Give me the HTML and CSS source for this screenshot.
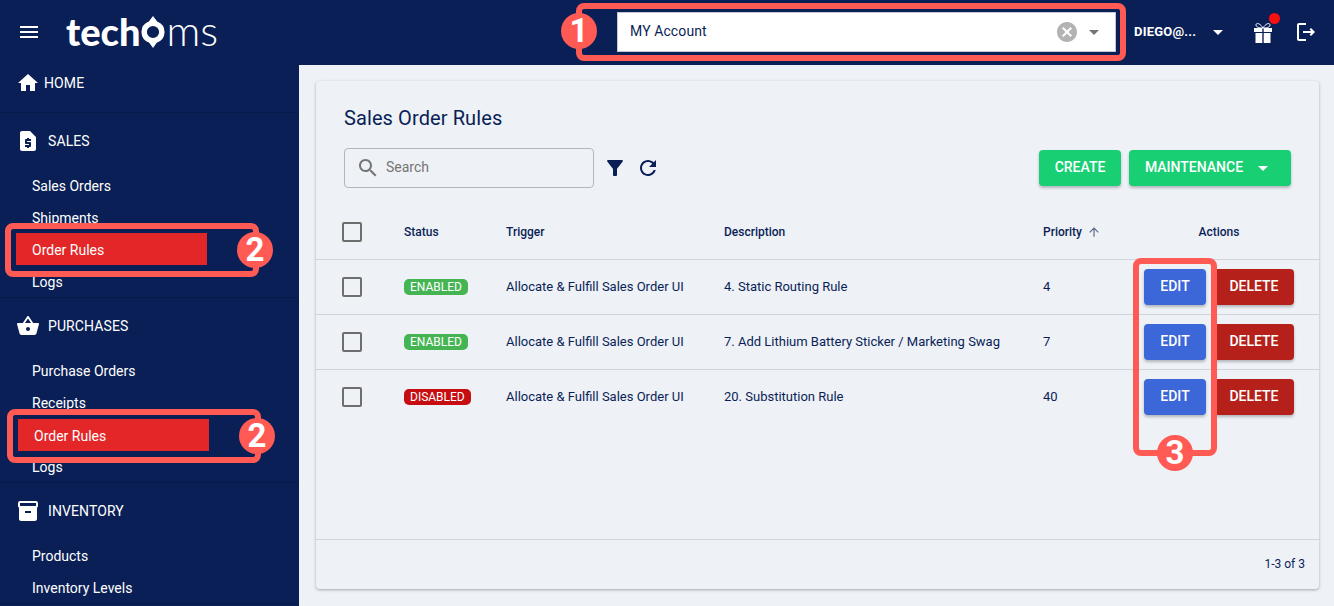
FILE: index.html
```html
<!DOCTYPE html>
<html lang="en">
<head>
    <meta charset="UTF-8">
    <meta name="viewport" content="width=device-width, initial-scale=1.0">
    <title>Sales Order Rules</title>
    <link rel="stylesheet" href="styles.css">
</head>
<body>
    <header class="topbar">
        <svg class="icon menu-icon" viewBox="0 0 24 24"><path d="M3 18h18v-2H3v2zm0-5h18v-2H3v2zm0-5h18V6H3v2z"/></svg>
        <div class="logo">
            <span class="logo-bold">tech</span>
            <svg class="logo-o" viewBox="0 0 26 34"><path d="M13 0l4.400 5.800A12.300 12.300 0 0 1 25.300 17 12.300 12.300 0 0 1 17 28.300L13 34l-4-5.700A12.300 12.300 0 0 1 .7 17 12.300 12.300 0 0 1 8.600 5.800zM13 10.500a6.500 6.500 0 1 0 0 13 6.500 6.500 0 0 0 0-13z" fill-rule="evenodd"/></svg>
            <span class="logo-light">ms</span>
        </div>
        <div class="spacer"></div>
        <div class="account-select">
            <span class="account-value">MY Account</span>
            <svg class="icon clear-icon" viewBox="0 0 24 24"><path d="M12 2C6.47 2 2 6.47 2 12s4.470 10 10 10 10-4.470 10-10S17.530 2 12 2zm5 13.590L15.590 17 12 13.410 8.410 17 7 15.590 10.590 12 7 8.410 8.410 7 12 10.590 15.590 7 17 8.410 13.410 12 17 15.590z"/></svg>
            <svg class="icon select-arrow" viewBox="0 0 24 24"><path d="M7 10l5 5 5-5z"/></svg>
        </div>
        <span class="user-name">DIEGO@...</span>
        <svg class="icon user-arrow" viewBox="0 0 24 24"><path d="M7 10l5 5 5-5z"/></svg>
        <div class="gift">
            <svg class="icon" viewBox="0 0 24 24">
                <path class="gift-bow" d="M12 8C9 3 5 2.500 5 5c0 2.500 4 3 7 3zM12 8c3-5 7-5.500 7-3 0 2.500-4 3-7 3z"/>
                <path d="M3 8h8.300v4H3zM12.700 8H21v4h-8.300zM4.500 13h6.800v10H4.500zM12.700 13h6.800v10h-6.800z"/>
            </svg>
            <span class="gift-dot"></span>
        </div>
        <svg class="icon logout-icon" viewBox="0 0 24 24"><path d="M17 8l-1.410 1.410L17.170 11H9v2h8.170l-1.580 1.580L17 16l4-4-4-4zM5 5h7V3H5c-1.100 0-2 .9-2 2v14c0 1.100.9 2 2 2h7v-2H5V5z"/></svg>
    </header>

    <div class="layout">
        <nav class="sidebar">
            <section class="nav-section nav-home">
                <div class="nav-head home-head">
                    <svg class="icon" viewBox="0 0 24 24"><path d="M10 20v-6h4v6h5v-8h3L12 3 2 12h3v8z"/></svg>
                    <span>HOME</span>
                </div>
            </section>
            <section class="nav-section">
                <div class="nav-head">
                    <svg class="icon" viewBox="0 0 24 24"><path d="M14 2H6c-1.100 0-2 .9-2 2v16c0 1.100.9 2 2 2h12c1.100 0 2-.9 2-2V8l-6-6zm1 10h-4v1h3c.55 0 1 .45 1 1v3c0 .55-.45 1-1 1h-1v1h-2v-1H9v-2h4v-1h-3c-.55 0-1-.45-1-1v-3c0-.55.45-1 1-1h1V9h2v1h2v2z"/></svg>
                    <span>SALES</span>
                </div>
                <a class="nav-item">Sales Orders</a>
                <a class="nav-item">Shipments</a>
                <a class="nav-item nav-marked">Order Rules</a>
                <a class="nav-item">Logs</a>
            </section>
            <section class="nav-section">
                <div class="nav-head">
                    <svg class="icon" viewBox="0 0 24 24"><path d="M17.210 9l-4.380-6.560c-.19-.28-.51-.42-.83-.42-.32 0-.64.14-.83.43L6.790 9H2c-.55 0-1 .45-1 1 0 .09.01.18.04.27l2.540 9.270c.23.84 1 1.460 1.920 1.460h13c.92 0 1.690-.62 1.930-1.460l2.540-9.270L23 10c0-.55-.45-1-1-1h-4.790zM9 9l3-4.400L15 9H9zm3 8c-1.100 0-2-.9-2-2s.9-2 2-2 2 .9 2 2-.9 2-2 2z"/></svg>
                    <span>PURCHASES</span>
                </div>
                <a class="nav-item">Purchase Orders</a>
                <a class="nav-item">Receipts</a>
                <a class="nav-item nav-marked nav-marked-low">Order Rules</a>
                <a class="nav-item">Logs</a>
            </section>
            <section class="nav-section">
                <div class="nav-head">
                    <svg class="icon" viewBox="0 0 24 24"><path d="M20 2H4c-1 0-2 .9-2 2v3.010c0 .72.43 1.340 1 1.690V20c0 1.100 1.100 2 2 2h14c.9 0 2-.9 2-2V8.700c.57-.35 1-.97 1-1.690V4c0-1.100-1-2-2-2zm-5 12H9v-2h6v2zm5-7H4V4l16-.02V7z"/></svg>
                    <span>INVENTORY</span>
                </div>
                <a class="nav-item">Products</a>
                <a class="nav-item">Inventory Levels</a>
            </section>
        </nav>

        <main class="content">
            <div class="card">
                <h1 class="card-title">Sales Order Rules</h1>
                <div class="toolbar">
                    <div class="search-box">
                        <svg class="icon" viewBox="0 0 24 24"><path d="M15.500 14h-.79l-.28-.27C15.410 12.590 16 11.110 16 9.500 16 5.910 13.090 3 9.500 3S3 5.910 3 9.500 5.910 16 9.500 16c1.610 0 3.090-.59 4.230-1.570l.27.28v.79l5 4.990L20.490 19l-4.990-5zm-6 0C7.010 14 5 11.990 5 9.500S7.010 5 9.500 5 14 7.010 14 9.500 11.990 14 9.500 14z"/></svg>
                        <span class="search-text">Search</span>
                    </div>
                    <svg class="icon tool-icon filter-icon" viewBox="0 0 24 24"><path d="M4.250 5.610C6.270 8.200 10 13 10 13v6c0 .55.45 1 1 1h2c.55 0 1-.45 1-1v-6s3.720-4.800 5.740-7.390c.51-.66.04-1.610-.79-1.610H5.040c-.83 0-1.300.95-.79 1.610z"/></svg>
                    <svg class="icon tool-icon refresh-icon" viewBox="0 0 24 24"><path d="M17.650 6.350C16.200 4.900 14.210 4 12 4c-4.420 0-7.990 3.580-7.990 8s3.570 8 7.990 8c3.730 0 6.840-2.550 7.730-6h-2.080c-.82 2.330-3.040 4-5.650 4-3.310 0-6-2.690-6-6s2.690-6 6-6c1.660 0 3.140.69 4.220 1.780L13 11h7V4l-2.350 2.350z"/></svg>
                    <div class="spacer"></div>
                    <button class="btn btn-green btn-create">Create</button>
                    <button class="btn btn-green btn-maintenance">Maintenance
                        <svg class="icon" viewBox="0 0 24 24"><path d="M7 10l5 5 5-5z"/></svg>
                    </button>
                </div>

                <table class="rules-table">
                    <colgroup>
                        <col class="col-check"><col class="col-status"><col class="col-trigger"><col class="col-desc"><col class="col-priority"><col class="col-actions">
                    </colgroup>
                    <thead>
                        <tr>
                            <th><span class="checkbox"></span></th>
                            <th>Status</th>
                            <th>Trigger</th>
                            <th>Description</th>
                            <th>Priority <svg class="sort-icon" viewBox="0 0 24 24"><path d="M4 12l1.410 1.410L11 7.830V20h2V7.830l5.580 5.590L20 12l-8-8-8 8z"/></svg></th>
                            <th class="actions-head">Actions</th>
                        </tr>
                    </thead>
                    <tbody>
                        <tr>
                            <td><span class="checkbox"></span></td>
                            <td class="chip-cell"><span class="chip chip-on">ENABLED</span></td>
                            <td>Allocate &amp; Fulfill Sales Order UI</td>
                            <td>4. Static Routing Rule</td>
                            <td>4</td>
                            <td><div class="row-actions"><button class="btn btn-blue">Edit</button><button class="btn btn-red">Delete</button></div></td>
                        </tr>
                        <tr>
                            <td><span class="checkbox"></span></td>
                            <td class="chip-cell"><span class="chip chip-on">ENABLED</span></td>
                            <td>Allocate &amp; Fulfill Sales Order UI</td>
                            <td>7. Add Lithium Battery Sticker / Marketing Swag</td>
                            <td>7</td>
                            <td><div class="row-actions"><button class="btn btn-blue">Edit</button><button class="btn btn-red">Delete</button></div></td>
                        </tr>
                        <tr>
                            <td><span class="checkbox"></span></td>
                            <td class="chip-cell"><span class="chip chip-off">DISABLED</span></td>
                            <td>Allocate &amp; Fulfill Sales Order UI</td>
                            <td>20. Substitution Rule</td>
                            <td>40</td>
                            <td><div class="row-actions"><button class="btn btn-blue">Edit</button><button class="btn btn-red">Delete</button></div></td>
                        </tr>
                    </tbody>
                </table>

                <div class="spacer"></div>
                <footer class="card-footer">1-3 of 3</footer>
            </div>
        </main>
    </div>

    <!-- callouts drawn over the screenshot -->
    <div class="callout-box box-account"></div>
    <div class="callout-box box-sales"></div>
    <div class="callout-box box-purchases"></div>
    <div class="callout-box box-edit"></div>
    <div class="callout-num num-one">1</div>
    <div class="callout-num num-sales">2</div>
    <div class="callout-num num-purchases">2</div>
    <div class="callout-num num-edit">3</div>
</body>
</html>
```

FILE: styles.css
```css
* {
    box-sizing: border-box;
}
body {
    margin: 0;
    height: 100vh;
    overflow: hidden;
    font-family: Roboto, "Liberation Sans", sans-serif;
    font-size: 14px;
    color: #0a1f56;
    background: #eef1f6;
}
.icon {
    display: block;
    flex: none;
    width: 24px;
    height: 24px;
    fill: currentColor;
}
.spacer {
    flex: 1;
}

/* top bar */
.topbar {
    display: flex;
    align-items: center;
    height: 65px;
    padding: 0 16px 2px 17px;
    background: #0a1f56;
    color: #fff;
}
.logo {
    display: flex;
    align-items: center;
    margin-left: 25px;
    font-family: Lato, sans-serif;
    line-height: 40px;
}
.logo-bold {
    font-size: 38px;
    font-weight: 900;
    margin-top: -2px;
}
.logo-light {
    font-size: 42px;
    font-weight: 300;
    margin-top: -3px;
}
.logo-o {
    width: 26px;
    height: 32px;
    margin-top: 1px;
    fill: #fff;
}
.account-select {
    display: flex;
    align-items: center;
    width: 499px;
    height: 40px;
    padding: 0 9px 0 12px;
    background: #fff;
    border: 1px solid #c4c8d2;
    color: #0a1f56;
    letter-spacing: 0.1px;
}
.account-value {
    flex: 1;
    margin-bottom: 2px;
}
.clear-icon {
    color: #b3b3b3;
    margin-right: 3px;
}
.select-arrow {
    color: #757575;
}
.user-name {
    margin-left: 18px;
    width: 72px;
    font-size: 13px;
    font-weight: 700;
    letter-spacing: 0.2px;
}
.user-arrow {
    margin-right: 21px;
}
.gift {
    position: relative;
    margin-right: 19px;
}
.gift-bow {
    fill: none;
    stroke: #fff;
    stroke-width: 1;
}
.gift-dot {
    position: absolute;
    top: -7px;
    right: -5px;
    width: 11px;
    height: 11px;
    border-radius: 50%;
    background: #fb0f0f;
}

/* sidebar */
.layout {
    display: flex;
    height: 541px;
}
.sidebar {
    flex: none;
    width: 299px;
    background: #0a1f56;
    color: #fff;
    overflow: hidden;
}
.nav-section {
    border-bottom: 1px solid #081a49;
}
.nav-home {
    height: 48px;
}
.nav-head {
    display: flex;
    align-items: center;
    gap: 8px;
    height: 56px;
    padding-left: 16px;
    letter-spacing: 0.1px;
}
.home-head {
    height: 36px;
    gap: 4px;
}
.nav-item {
    display: block;
    height: 32px;
    padding-left: 32px;
    line-height: 34px;
}
.nav-marked {
    width: 191px;
    margin-left: 16px;
    padding-left: 16px;
    background: #e32728;
}
.nav-marked-low {
    margin-left: 18px;
    transform: translateY(1px);
}

/* card */
.content {
    flex: 1;
    padding: 16px 15px 17px 17px;
}
.card {
    display: flex;
    flex-direction: column;
    height: 508px;
    background: #eef1f6;
    border-radius: 4px;
    box-shadow: 0 1px 3px rgba(0, 0, 0, 0.3);
}
.card-title {
    margin: 24px 0 0 28px;
    font-size: 20px;
    font-weight: 400;
    line-height: 26px;
    letter-spacing: 0.1px;
}
.toolbar {
    display: flex;
    align-items: center;
    height: 40px;
    margin-top: 17px;
    padding: 0 28px;
}
.search-box {
    display: flex;
    align-items: center;
    gap: 6px;
    width: 250px;
    height: 40px;
    padding-left: 11px;
    border: 1px solid #b3b6bd;
    border-radius: 4px;
    color: #757575;
}
.search-text {
    margin-bottom: 2px;
}
.tool-icon {
    color: #0a1f56;
}
.filter-icon {
    margin-left: 9px;
}
.refresh-icon {
    margin-left: 9px;
}
.btn {
    display: flex;
    align-items: center;
    justify-content: center;
    height: 36px;
    padding: 0 0 2px;
    border: none;
    border-radius: 4px;
    color: #fff;
    font-family: inherit;
    font-size: 14px;
    font-weight: 500;
    text-transform: uppercase;
    box-shadow: 0 2px 3px rgba(0, 0, 0, 0.25);
}
.btn-green {
    background: #18cf74;
}
.btn-create {
    width: 82px;
}
.btn-maintenance {
    width: 162px;
    margin-left: 8px;
    gap: 8px;
}
.btn-maintenance .icon {
    margin-top: 2px;
}
.btn-blue {
    width: 62px;
    background: #3b67d9;
}
.btn-red {
    width: 80px;
    background: #b5211a;
}

/* table */
.rules-table {
    width: 100%;
    margin-top: 16px;
    border-collapse: separate;
    border-spacing: 0;
    table-layout: fixed;
    font-size: 13px;
}
.col-check {
    width: 72px;
}
.col-status {
    width: 102px;
}
.col-trigger {
    width: 218px;
}
.col-desc {
    width: 319px;
}
.col-priority {
    width: 101px;
}
.rules-table th,
.rules-table td {
    height: 55px;
    padding: 0 0 2px 16px;
    border-bottom: 1px solid #d1d4db;
    text-align: left;
    vertical-align: middle;
}
.rules-table th {
    height: 56px;
    padding-bottom: 0;
    font-size: 12px;
    font-weight: 500;
}
.rules-table tbody tr:last-child td {
    border-bottom-color: transparent;
}
.rules-table th:first-child,
.rules-table td:first-child {
    padding-left: 26px;
}
.rules-table td:first-child,
.rules-table td:last-child,
.rules-table .chip-cell {
    padding-bottom: 0;
}
.rules-table .actions-head {
    text-align: center;
    padding-right: 25px;
}
.checkbox {
    display: block;
    width: 20px;
    height: 20px;
    border: 2px solid #6e6e6e;
    border-radius: 2px;
}
.sort-icon {
    width: 14px;
    height: 14px;
    margin-left: 2px;
    vertical-align: -3px;
    fill: #5a6787;
}
.chip {
    display: block;
    width: max-content;
    height: 16px;
    padding: 0 6px;
    border-radius: 5px;
    color: #fff;
    font-size: 12px;
    line-height: 16px;
}
.chip-on {
    background: #45b553;
}
.chip-off {
    background: #c50d12;
}
.row-actions {
    display: flex;
    gap: 8px;
}
.card-footer {
    height: 50px;
    padding-right: 14px;
    border-top: 1px solid #d1d4db;
    font-size: 12px;
    line-height: 48px;
    text-align: right;
}

/* callouts */
.callout-box {
    position: absolute;
    border: 6px solid #ff5a54;
    border-radius: 8px;
}
.box-account {
    left: 576px;
    top: 3px;
    width: 550px;
    height: 58px;
}
.box-sales {
    left: 5px;
    top: 223px;
    width: 254px;
    height: 54px;
}
.box-purchases {
    left: 7px;
    top: 409px;
    width: 254px;
    height: 54px;
}
.box-edit {
    left: 1133px;
    top: 258px;
    width: 84px;
    height: 198px;
}
.callout-num {
    position: absolute;
    width: 36px;
    height: 36px;
    border-radius: 50%;
    background: #ff5a54;
    color: #fff;
    font-size: 33px;
    font-weight: 700;
    line-height: 36px;
    text-align: center;
}
.num-one {
    left: 561px;
    top: 13px;
}
.num-sales {
    left: 237px;
    top: 232px;
}
.num-purchases {
    left: 239px;
    top: 418px;
}
.num-edit {
    left: 1157px;
    top: 435px;
}
```
